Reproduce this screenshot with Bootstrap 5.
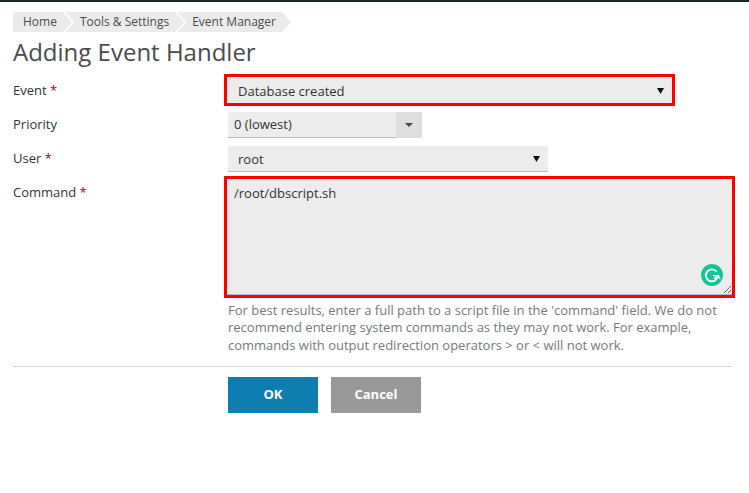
<!DOCTYPE html>
<html lang="en">
<head>
    <meta charset="UTF-8">
    <title>Adding Event Handler</title>
    <link href="https://cdn.jsdelivr.net/npm/bootstrap@5.3.0/dist/css/bootstrap.min.css" rel="stylesheet">
    <style>
        body {
            background: #fff;
            color: #4b4b4b;
            font-family: "Open Sans", "Liberation Sans", sans-serif;
            font-size: 13px;
            border-top: 2px solid #1d262d;
            overflow: hidden;
        }

        .page-wrap {
            padding: 10px 13px 0;
        }

        .crumbs {
            height: 20px;
            margin: 0 0 4px;
            font-size: 12px;
        }

        .crumbs span {
            background: #ebebeb;
            line-height: 20px;
            height: 20px;
            padding: 0 15px;
            margin-right: -7px;
            clip-path: polygon(0 0, calc(100% - 9px) 0, 100% 50%, calc(100% - 9px) 100%, 0 100%, 9px 50%);
        }

        .crumbs span:first-child {
            padding-left: 10px;
            clip-path: polygon(0 0, calc(100% - 9px) 0, 100% 50%, calc(100% - 9px) 100%, 0 100%);
        }

        h1.page-title {
            font-size: 24px;
            font-weight: 400;
            line-height: 32px;
            margin: 0 0 6px;
            color: #4b4b4b;
        }

        .form-line {
            display: flex;
        }

        .line-priority {
            margin-top: 6px;
        }

        .line-user {
            margin-top: 8px;
        }

        .line-command {
            margin-top: 4px;
        }

        .line-label {
            width: 215px;
            flex: none;
            color: #333;
            padding-top: 3px;
        }

        .label-event {
            padding-top: 7px;
        }

        .label-command {
            padding-top: 7px;
        }

        .req {
            color: #a5001e;
        }

        .red-box {
            border: 3px solid #f00;
            margin-left: -4px;
        }

        .field-select.form-select {
            background-color: #ececec;
            background-image: url("data:image/svg+xml,%3Csvg xmlns='http://www.w3.org/2000/svg' width='7' height='7'%3E%3Cpath d='M0 1h7L3.5 7z' fill='%23111'/%3E%3C/svg%3E");
            background-size: 7px 7px;
            background-position: right 8px center;
            border: 0;
            border-bottom: 1px solid #b5bcc2;
            border-radius: 0;
            color: #333;
            font-size: 13px;
            height: 26px;
            line-height: 1.2;
            padding: 2px 20px 0 10px;
            box-shadow: none;
        }

        .red-box .field-select.form-select {
            height: 26px;
            border-bottom: 0;
            padding: 3px 20px 0 11px;
        }

        .event-box {
            width: 451px;
        }

        .user-select {
            width: 320px;
        }

        .priority-combo {
            width: 194px;
            height: 26px;
        }

        .priority-value {
            background: #ececec;
            border-bottom: 1px solid #b5bcc2;
            padding-left: 6px;
            line-height: 25px;
            color: #333;
        }

        .priority-arrow {
            width: 26px;
            background: #dedede;
        }

        .priority-arrow i {
            border-left: 4px solid transparent;
            border-right: 4px solid transparent;
            border-top: 4px solid #444;
        }

        .command-box {
            width: 511px;
            height: 122px;
            position: relative;
            background: #ececec;
        }

        .command-box textarea {
            display: block;
            width: 100%;
            height: 100%;
            background: #ececec;
            border: 0;
            border-bottom: 1px solid #b5bcc2;
            border-radius: 0;
            color: #333;
            font-size: 13px;
            padding: 5px 7px;
            outline: 0;
        }

        .grammarly-mark {
            position: absolute;
            right: 9px;
            bottom: 9px;
            width: 22px;
            height: 22px;
        }

        .help-note {
            color: #74797e;
            font-size: 13px;
            line-height: 17.33px;
            width: 510px;
            margin: 4px 0 0 215px;
        }

        .form-rule {
            margin: 12px 0 10px;
            border: 0;
            border-top: 1px solid #d9d9d9;
            opacity: 1;
            width: 719px;
        }

        .act-row {
            margin-left: 215px;
            gap: 13px;
        }

        .act-btn {
            width: 90px;
            height: 36px;
            border: 0;
            border-radius: 0;
            color: #fff;
            font-size: 13px;
            font-weight: 700;
            padding: 0;
        }

        .act-ok {
            background: #0e7eb0;
        }

        .act-cancel {
            background: #999;
        }
    </style>
</head>
<body>
<div class="page-wrap">
    <div class="crumbs d-flex">
        <span>Home</span>
        <span>Tools &amp; Settings</span>
        <span>Event Manager</span>
    </div>
    <h1 class="page-title">Adding Event Handler</h1>

    <form>
        <div class="form-line">
            <div class="line-label label-event">Event <span class="req">*</span></div>
            <div class="red-box event-box">
                <select class="form-select field-select"><option>Database created</option></select>
            </div>
        </div>

        <div class="form-line line-priority">
            <div class="line-label">Priority</div>
            <div class="priority-combo d-flex">
                <div class="priority-value flex-grow-1">0 (lowest)</div>
                <div class="priority-arrow d-flex align-items-center justify-content-center"><i></i></div>
            </div>
        </div>

        <div class="form-line line-user">
            <div class="line-label">User <span class="req">*</span></div>
            <select class="form-select field-select user-select"><option>root</option></select>
        </div>

        <div class="form-line line-command">
            <div class="line-label label-command">Command <span class="req">*</span></div>
            <div class="red-box command-box">
                <textarea>/root/dbscript.sh</textarea>
                <svg class="grammarly-mark" viewBox="0 0 22 22">
                    <circle cx="11" cy="11" r="11" fill="#15c39a"/>
                    <path d="M15.6 7.6A6 6 0 1 0 16.8 12.4" fill="none" stroke="#fff" stroke-width="1.8"/>
                    <path d="M12 11.6h5.4M13 14.6l4.2 -3 2 3.2" fill="none" stroke="#fff" stroke-width="1.3"/>
                </svg>
            </div>
        </div>

        <p class="help-note">For best results, enter a full path to a script file in the 'command' field. We do not recommend entering system commands as they may not work. For example, commands with output redirection operators &gt; or &lt; will not work.</p>

        <hr class="form-rule">

        <div class="d-flex act-row">
            <button type="button" class="btn act-btn act-ok">OK</button>
            <button type="button" class="btn act-btn act-cancel">Cancel</button>
        </div>
    </form>
</div>
<script src="https://cdn.jsdelivr.net/npm/bootstrap@5.3.0/dist/js/bootstrap.bundle.min.js"></script>
</body>
</html>
